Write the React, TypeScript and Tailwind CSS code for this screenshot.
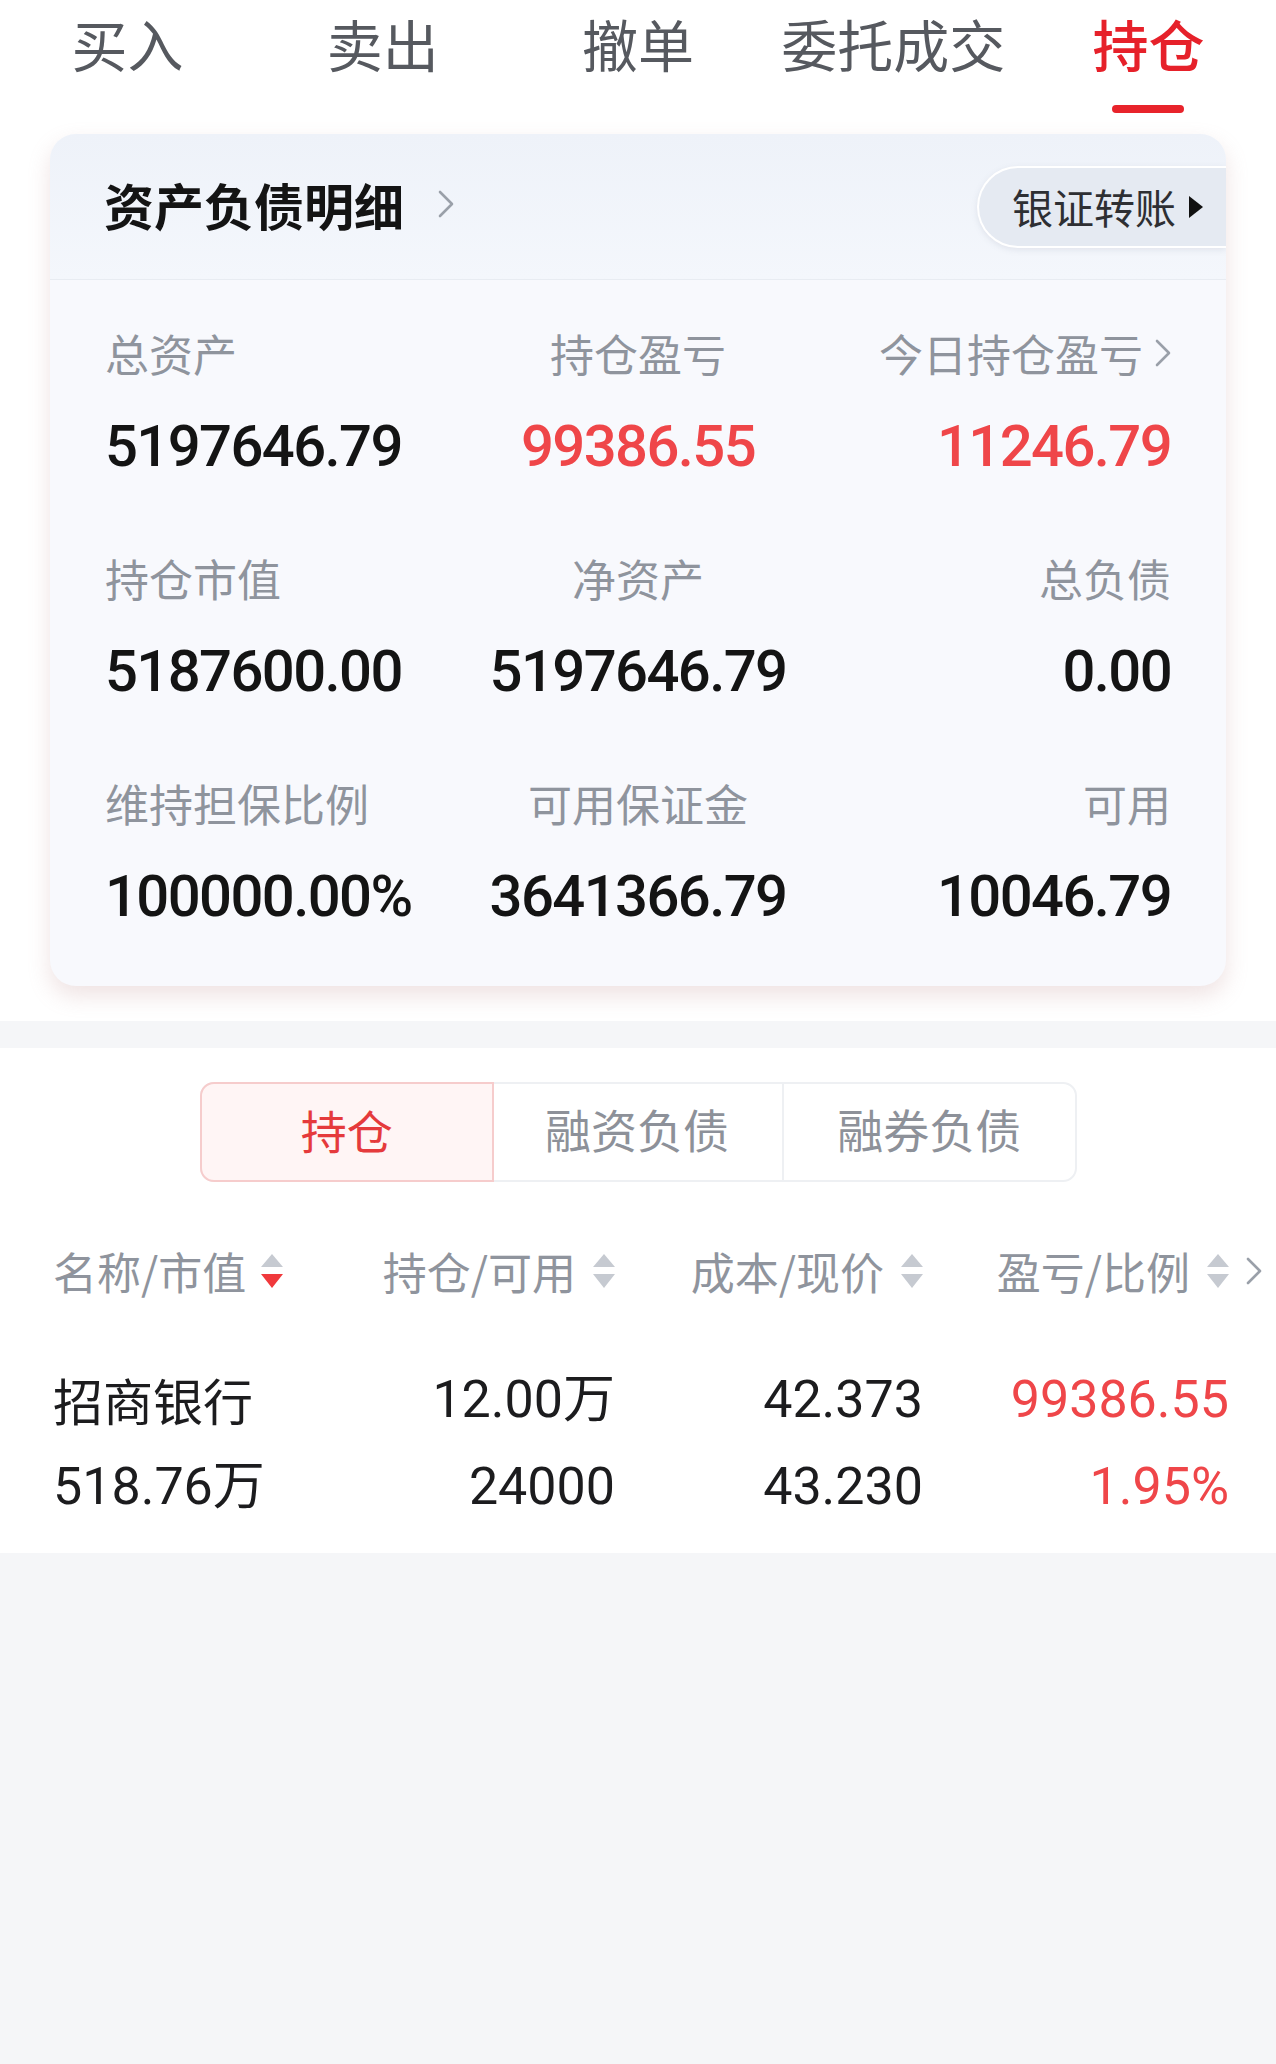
import React from "react";

const cjk = "font-['Noto_Sans_CJK_SC',sans-serif]";
const num = "font-['Roboto','Noto_Sans_CJK_SC',sans-serif]";

interface Stat {
  label: string;
  value: string;
  red?: boolean;
  arrow?: boolean;
}

const tabs = ["买入", "卖出", "撤单", "委托成交", "持仓"];

const stats: Stat[] = [
  { label: "总资产", value: "5197646.79" },
  { label: "持仓盈亏", value: "99386.55", red: true },
  { label: "今日持仓盈亏", value: "11246.79", red: true, arrow: true },
  { label: "持仓市值", value: "5187600.00" },
  { label: "净资产", value: "5197646.79" },
  { label: "总负债", value: "0.00" },
  { label: "维持担保比例", value: "100000.00%" },
  { label: "可用保证金", value: "3641366.79" },
  { label: "可用", value: "10046.79" },
];

const align = ["items-start", "items-center", "items-end"];

function Chevron({ color = "#9aa0a9" }: { color?: string }) {
  return (
    <svg width="16" height="30" viewBox="0 0 16 30" className="shrink-0">
      <polyline points="2,3 14,15 2,27" fill="none" stroke={color} strokeWidth="2.6" strokeLinecap="round" strokeLinejoin="round" />
    </svg>
  );
}

function SortIcon({ active = false }: { active?: boolean }) {
  return (
    <svg width="22" height="34" viewBox="0 0 22 34" className="shrink-0">
      <path d="M11 0 L22 13 L0 13 Z" fill="#c6cad1" />
      <path d="M0 20 L22 20 L11 34 Z" fill={active ? "#f0393c" : "#c6cad1"} />
    </svg>
  );
}

export default function App() {
  return (
    <div className={`min-h-[2064px] w-[1276px] bg-[#f5f6f8] ${cjk}`}>
      {/* top tabs + asset card */}
      <div className="bg-white pb-[35px]">
        <div className="flex pt-[16px]">
          {tabs.map((t, i) => (
            <div key={t} className="flex flex-1 flex-col items-center">
              <span
                className={
                  i === 4
                    ? "text-[56px] leading-[54px] font-medium text-[#e6212a]"
                    : "text-[56px] leading-[54px] text-[#56595f]"
                }
              >
                {t}
              </span>
              <div className={i === 4 ? "mt-[35px] h-[8px] w-[72px] rounded-full bg-[#e8232b]" : "mt-[35px] h-[8px] w-[72px]"} />
            </div>
          ))}
        </div>

        <div className="mx-[50px] mt-[21px] overflow-hidden rounded-[26px] bg-[#f8f9fd] shadow-[0_10px_22px_rgba(190,140,140,0.24)]">
          <div className="flex h-[146px] items-center justify-between border-b border-[#e8ecf2] bg-linear-to-b from-[#eef2f9] to-[#f4f7fc] pl-[54px]">
            <div className="mb-[6px] flex items-center gap-[34px]">
              <span className="text-[50px] leading-[50px] font-bold text-[#141414]">资产负债明细</span>
              <Chevron />
            </div>
            <div className="flex h-[82px] w-[249px] items-center gap-[12px] rounded-l-full border-2 border-r-0 border-white bg-[#e5eaf2] pl-[33px] shadow-[0_2px_6px_rgba(120,130,150,0.15)]">
              <span className="text-[41px] leading-[41px] text-[#2e2f33]">银证转账</span>
              <svg width="16" height="24" viewBox="0 0 16 24">
                <path d="M1 1 L15 12 L1 23 Z" fill="#111" />
              </svg>
            </div>
          </div>

          <div className="grid grid-cols-3 gap-y-[78px] px-[55px] pt-[51px] pb-[58px]">
            {stats.map((s, i) => (
              <div key={s.label} className={`flex flex-col ${align[i % 3]}`}>
                <div className="flex items-center gap-[12px]">
                  <span className="text-[44px] leading-[44px] text-[#8f949d]">{s.label}</span>
                  {s.arrow && <Chevron />}
                </div>
                <span
                  className={`${num} mt-[39px] text-[58px] leading-[64px] font-medium tracking-[-1.6px] ${
                    s.red ? "text-[#ef4649]" : "text-[#141414]"
                  }`}
                >
                  {s.value}
                </span>
              </div>
            ))}
          </div>
        </div>
      </div>

      {/* positions section */}
      <div className="mt-[27px] bg-white pt-[34px] pb-[23px]">
        <div className="mx-auto flex h-[100px] w-[877px] rounded-[14px] border-2 border-[#eef0f3]">
          <div className="-m-[2px] flex flex-1 items-center justify-center rounded-l-[14px] border-2 border-[#f6cccc] bg-[#fff5f5] pb-[6px]">
            <span className="text-[46px] leading-[46px] text-[#e53a3c]">持仓</span>
          </div>
          <div className="flex flex-1 items-center justify-center pb-[8px]">
            <span className="text-[46px] leading-[46px] text-[#8d9199]">融资负债</span>
          </div>
          <div className="flex flex-1 items-center justify-center border-l-2 border-[#eef0f3] pb-[8px]">
            <span className="text-[46px] leading-[46px] text-[#8d9199]">融券负债</span>
          </div>
        </div>

        <div className="mt-[67px] flex pl-[53px] text-[44px] leading-[44px] text-[#8f949d]">
          <div className="flex w-[277px] items-center gap-[15px]">
            <span>名称/市值</span>
            <SortIcon active />
          </div>
          <div className="flex w-[285px] items-center justify-end gap-[17px]">
            <span>持仓/可用</span>
            <SortIcon />
          </div>
          <div className="flex w-[308px] items-center justify-end gap-[17px]">
            <span>成本/现价</span>
            <SortIcon />
          </div>
          <div className="flex w-[306px] items-center justify-end gap-[17px]">
            <span>盈亏/比例</span>
            <SortIcon />
            <div className="-mr-[33px]">
              <Chevron />
            </div>
          </div>
        </div>

        <div className={`mt-[63px] flex pl-[53px] ${num} text-[52px] leading-[87px] text-[#1c1c1e]`}>
          <div className="flex w-[277px] flex-col">
            <span className={`${cjk} text-[50px]`}>招商银行</span>
            <span>518.76万</span>
          </div>
          <div className="flex w-[285px] flex-col items-end">
            <span>12.00万</span>
            <span>24000</span>
          </div>
          <div className="flex w-[308px] flex-col items-end">
            <span>42.373</span>
            <span>43.230</span>
          </div>
          <div className="flex w-[306px] flex-col items-end text-[#ef4649]">
            <span>99386.55</span>
            <span>1.95%</span>
          </div>
        </div>
      </div>
    </div>
  );
}
